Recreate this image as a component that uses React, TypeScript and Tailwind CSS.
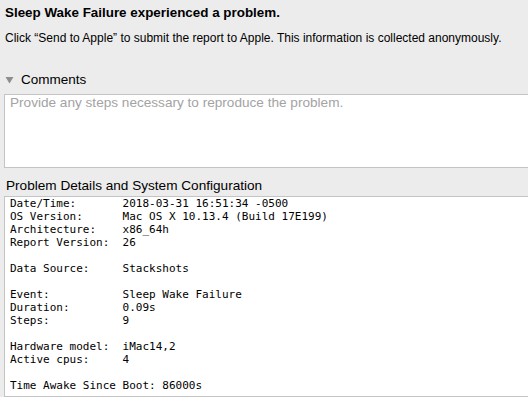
import React from "react";

const sans = "font-['Helvetica_Neue','Liberation_Sans',Arial,sans-serif]";

const details: string[] = [
  "Date/Time:       2018-03-31 16:51:34 -0500",
  "OS Version:      Mac OS X 10.13.4 (Build 17E199)",
  "Architecture:    x86_64h",
  "Report Version:  26",
  "",
  "Data Source:     Stackshots",
  "",
  "Event:           Sleep Wake Failure",
  "Duration:        0.09s",
  "Steps:           9",
  "",
  "Hardware model:  iMac14,2",
  "Active cpus:     4",
  "",
  "Time Awake Since Boot: 86000s",
];

const App: React.FC = () => {
  return (
    <div className={`flex h-[397px] w-[528px] flex-col overflow-hidden bg-[#ececec] text-black ${sans}`}>
      <h1 className="pl-[5px] pt-[5px] text-[13.4px] font-bold leading-[16px]">
        Sleep Wake Failure experienced a problem.
      </h1>
      <p className="mt-[10px] pl-[5px] text-[12px] leading-[14px]">
        Click “Send to Apple” to submit the report to Apple. This information is collected anonymously.
      </p>

      <div className="mt-[27px] flex items-center gap-[7px] pl-[5px] text-[13.5px] leading-[16px]">
        <svg width="9" height="8" viewBox="0 0 9 8" className="shrink-0">
          <path d="M0.5 1 L8.5 1 L4.5 7.5 Z" fill="#8e8e8e" />
        </svg>
        Comments
      </div>

      <div className="ml-[4px] mt-[6px] h-[74px] w-[540px] shrink-0 border border-[#c4c4c4] bg-white px-[5px] text-[13.6px] leading-[16px] text-[#a3a3a3]">
        Provide any steps necessary to reproduce the problem.
      </div>

      <div className="mt-[10px] pl-[6px] text-[13.6px] leading-[16px]">
        Problem Details and System Configuration
      </div>

      <div className="ml-[4px] mt-[2px] w-[540px] flex-1 border border-[#c4c4c4] bg-white pl-[5px] font-['DejaVu_Sans_Mono','Liberation_Mono',monospace] text-[11px] leading-[13px]">
        {details.map((line, i) => (
          <div key={i} className="h-[13px] whitespace-pre">
            {line}
          </div>
        ))}
      </div>
    </div>
  );
};

export default App;
